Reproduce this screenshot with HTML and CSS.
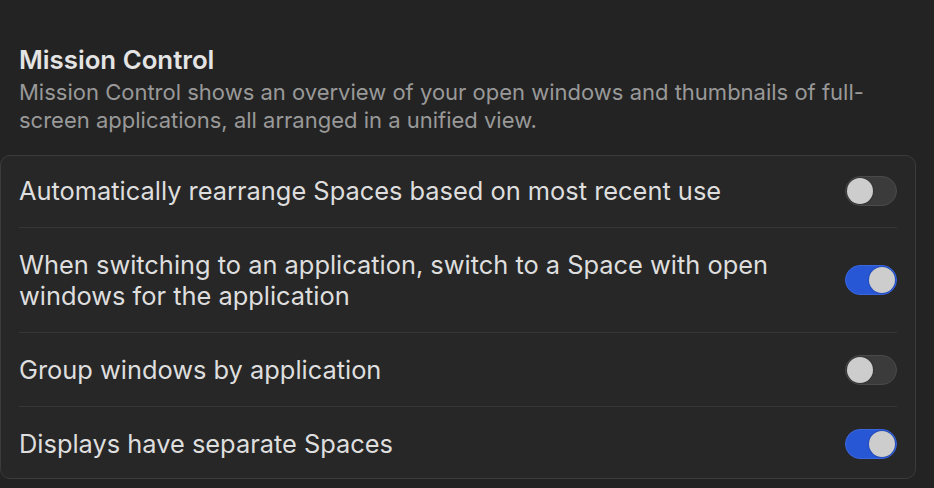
FILE: index.html
```html
<!DOCTYPE html>
<html lang="en">
<head>
  <meta charset="UTF-8">
  <meta name="viewport" content="width=device-width, initial-scale=1.0">
  <title>Mission Control</title>
  <link rel="stylesheet" href="styles.css">
</head>
<body>

<div class="section-head">
  <h2>Mission Control</h2>
  <p>Mission Control shows an overview of your open windows and thumbnails of full-<br>screen applications, all arranged in a unified view.</p>
</div>

<div class="card">
  <div class="row first">
    <span class="label">Automatically rearrange Spaces based on most recent use</span>
    <span class="switch"></span>
  </div>
  <div class="row">
    <span class="label">When switching to an application, switch to a Space with open<br>windows for the application</span>
    <span class="switch on"></span>
  </div>
  <div class="row">
    <span class="label">Group windows by application</span>
    <span class="switch"></span>
  </div>
  <div class="row">
    <span class="label">Displays have separate Spaces</span>
    <span class="switch on"></span>
  </div>
</div>

</body>
</html>
```

FILE: styles.css
```css
body {
  font-family: Inter, "Noto Sans", sans-serif;
  margin: 0;
  background-color: #232323;
  color: #dedede;
  height: 488px;
  overflow: hidden;
}

.section-head {
  padding: 44px 0 0 19px;
}

.section-head h2 {
  margin: 0;
  font-size: 25.8px;
  line-height: 32px;
  font-weight: 600;
  color: #e4e4e4;
}

.section-head p {
  margin: 2px 0 0;
  font-size: 22px;
  line-height: 28px;
  color: #999;
}

.card {
  margin-top: 21px;
  width: 914px;
  height: 322px;
  background-color: #272727;
  border: 1px solid #3b3b3b;
  border-radius: 10px;
  overflow: hidden;
}

.row {
  display: flex;
  align-items: center;
  justify-content: space-between;
  margin: 0 18px;
  padding: 21px 0;
  border-bottom: 1px solid #363636;
  font-size: 25.4px;
  line-height: 31px;
}

.row.first {
  padding-top: 19px;
}

.row:last-child {
  border-bottom: none;
}

.switch {
  position: relative;
  flex-shrink: 0;
  width: 50px;
  height: 28px;
  border: 1px solid #4a4a4a;
  border-radius: 15px;
  background-color: #3b3b3b;
}

.switch::after {
  content: "";
  position: absolute;
  top: 1px;
  left: 1px;
  width: 26px;
  height: 26px;
  border-radius: 50%;
  background-color: #cdcdcd;
  box-shadow: 0 0 2px rgba(0, 0, 0, 0.4);
}

.switch.on {
  background-color: #2857d6;
  border-color: #3a67e0;
}

.switch.on::after {
  left: 23px;
}
```
